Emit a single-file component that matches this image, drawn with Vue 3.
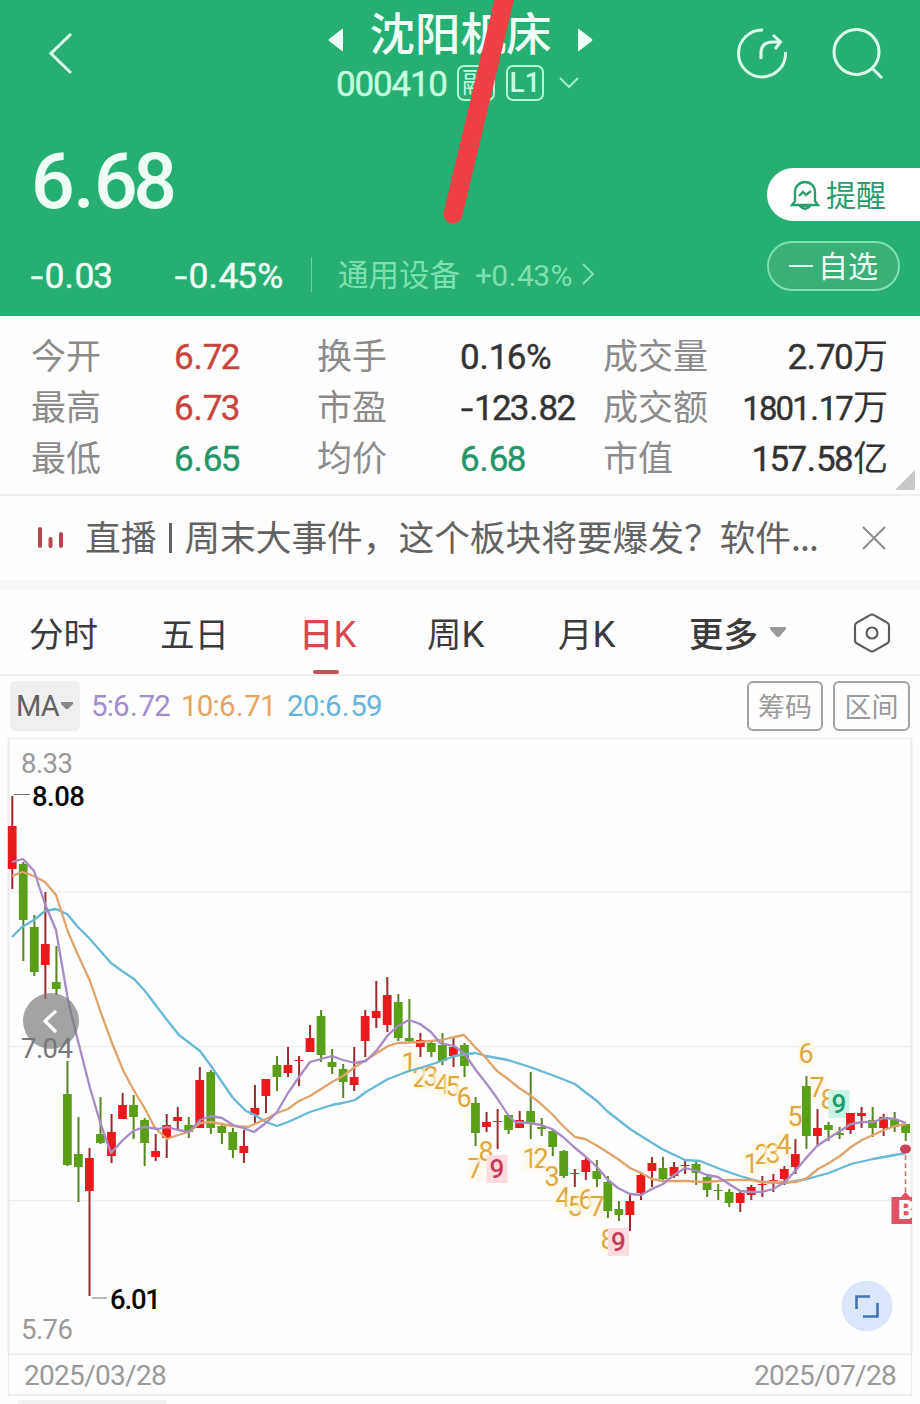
<script setup>
import { h } from 'vue'

// Numerals with roomier punctuation: every sign gets its own spacing
const signs = { '.': 'dot', '-': 'minus', '+': 'plus', '%': 'percent' }
const Num = (props) => h('b', { class: 'num' },
  props.v.split(/([.\-+%])/).filter(Boolean).map((p) => (signs[p] ? h('i', { class: signs[p] }, p) : p)))
Num.props = ['v']

const quotes = [
  [['今开', '6.72', 'up'], ['换手', '0.16%', ''], ['成交量', '2.70', '', '万']],
  [['最高', '6.73', 'up'], ['市盈', '-123.82', ''], ['成交额', '1801.17', '', '万']],
  [['最低', '6.65', 'down'], ['均价', '6.68', 'down'], ['市值', '157.58', '', '亿']],
]

const tabs = [['分时', ''], ['五日', ''], ['日', 'K'], ['周', 'K'], ['月', 'K']]

// direction, body top, body bottom, wick top, wick bottom
const raw = `r 826 869 796 889|g 864 920 862 961|g 927 972 915 976|r 944 965 892 999|g 982 989 946 995
g 1094 1165 1061 1166|g 1154 1167 1117 1202|r 1158 1191 1148 1296|g 1134 1143 1097 1144|r 1132 1156 1114 1163
r 1105 1119 1093 1119|g 1105 1117 1095 1139|g 1120 1143 1118 1166|r 1151 1157 1134 1161|r 1125 1138 1114 1158
r 1117 1121 1107 1130|g 1125 1132 1117 1138|r 1080 1128 1067 1128|g 1072 1128 1070 1134|g 1126 1133 1125 1144
g 1132 1150 1128 1158|r 1146 1153 1130 1163|r 1108 1115 1085 1124|r 1079 1096 1079 1113|g 1065 1077 1056 1091
r 1065 1073 1047 1077|r 1060 1061 1056 1086|r 1038 1052 1025 1052|g 1016 1055 1010 1062|g 1062 1067 1049 1074
g 1069 1082 1064 1098|r 1077 1085 1047 1091|r 1016 1041 1010 1057|r 1011 1018 981 1028|r 995 1025 977 1032
g 1002 1038 994 1041|g 1038 1041 999 1042|r 1040 1047 1033 1057|g 1043 1052 1041 1057|g 1045 1061 1033 1065
r 1047 1056 1038 1067|g 1045 1066 1043 1077|g 1103 1133 1097 1146|r 1122 1127 1112 1132|r 1121 1122 1109 1149
g 1115 1130 1115 1134|r 1120 1128 1111 1128|g 1111 1123 1072 1139|g 1127 1129 1118 1136|g 1131 1147 1130 1156
g 1151 1176 1150 1178|r 1173 1174 1169 1187|r 1160 1172 1158 1180|g 1171 1179 1160 1187|g 1182 1211 1176 1218
g 1209 1215 1201 1221|r 1201 1215 1194 1231|r 1175 1193 1172 1200|r 1163 1171 1157 1187|g 1168 1179 1157 1182
r 1167 1176 1162 1178|r 1165 1166 1160 1174|g 1164 1173 1161 1185|g 1177 1190 1174 1197|g 1190 1191 1184 1200
g 1192 1203 1189 1207|r 1193 1203 1191 1212|r 1187 1195 1185 1200|r 1184 1185 1176 1197|r 1180 1182 1174 1192
r 1169 1179 1166 1185|r 1154 1167 1139 1174|g 1086 1136 1076 1149|r 1128 1136 1109 1145|g 1125 1130 1122 1141
g 1133 1135 1127 1139|r 1113 1130 1113 1134|r 1113 1116 1107 1128|g 1120 1128 1107 1137|r 1117 1128 1114 1136
g 1119 1127 1112 1132|g 1124 1133 1124 1141`

const candles = raw.split(/[|\n]/).map((s, i) => {
  const [dir, ...n] = s.trim().split(' ')
  const [top, bottom, high, low] = n.map(Number)
  return { dir, top, bottom, high, low, x: 12.2 + 11.03 * i }
})

const ma5 = '12,862 23,859 34,871 45,904 56,930 68,1000 77,1037 90,1088 101,1125 111,1153 122,1141 133,1131 144,1127 158,1129 167,1127 178,1130 189,1132 200,1120 211,1116 222,1118 233,1125 243,1128 254,1132 267,1122 277,1112 288,1093 299,1077 310,1062 321,1059 332,1056 343,1060 355,1063 366,1061 377,1050 388,1035 398,1026 409,1020 420,1024 431,1032 440,1043 454,1046 464,1053 475,1069 486,1083 497,1098 508,1115 515,1122 530,1123 541,1125 552,1129 563,1137 574,1147 586,1157 597,1167 608,1180 618,1188 630,1194 641,1195 652,1189 663,1184 674,1175 685,1168 697,1171 707,1175 718,1177 729,1184 740,1191 751,1192 762,1192 773,1189 785,1182 796,1170 807,1157 817,1146 829,1138 840,1131 851,1124 862,1122 873,1122 884,1118 895,1119 906,1123'
const ma10 = '12,876 22,872 34,876 45,882 56,895 68,932 78,955 90,981 101,1013 112,1043 123,1070 133,1089 144,1107 155,1128 167,1139 178,1135 189,1132 200,1123 211,1122 222,1124 233,1126 248,1127 266,1119 277,1113 288,1109 299,1101 310,1096 321,1089 332,1082 343,1076 355,1067 366,1060 377,1053 388,1046 398,1043 420,1042 431,1041 442,1040 454,1037 464,1035 475,1047 486,1058 497,1071 508,1079 519,1088 530,1095 541,1104 552,1114 563,1126 575,1137 585,1139 596,1145 607,1152 618,1159 630,1168 641,1173 652,1179 663,1181 685,1181 707,1182 729,1180 751,1180 762,1182 796,1182 807,1178 818,1169 829,1163 840,1156 851,1147 862,1140 873,1135 884,1130 895,1126 906,1124'
const ma20 = '12,937 22,927 34,920 45,911 56,909 67,914 78,927 89,938 111,963 122,971 134,979 145,991 167,1020 179,1035 200,1051 211,1066 222,1082 233,1098 246,1111 255,1115 266,1122 277,1126 288,1122 310,1112 332,1105 343,1103 355,1100 366,1092 388,1079 409,1071 420,1068 442,1061 454,1056 475,1053 486,1056 508,1060 530,1067 552,1075 575,1084 585,1092 597,1101 607,1111 630,1129 641,1136 662,1149 685,1160 700,1161 720,1169 740,1176 762,1182 785,1183 807,1179 829,1173 851,1164 873,1159 895,1155 906,1153'

// digit, centre x, baseline, chip; every mark lies over the one before it
const marks = [
  ['1', 409, 1072], ['2', 420, 1087], ['3', 431, 1086], ['4', 442, 1094], ['5', 453, 1096], ['6', 464, 1107],
  ['7', 475, 1178], ['8', 486, 1161], ['9', 497, 1178, 'buy'],
  ['1', 530, 1168], ['2', 541, 1168], ['3', 552, 1186],
  ['4', 563, 1207], ['5', 575, 1216], ['6', 586, 1209], ['7', 597, 1216], ['8', 608, 1249], ['9', 618.5, 1251, 'buy'],
  ['1', 751, 1173], ['2', 762, 1164], ['3', 773, 1163], ['4', 784, 1154], ['5', 795, 1126],
  ['6', 806, 1063], ['7', 817, 1097], ['8', 828, 1109], ['9', 839, 1113, 'sell'],
]
</script>

<template>
  <main class="screen">
    <header class="header">
      <div class="titlebar">
        <svg class="back" width="24" height="42" viewBox="0 0 24 42"><path d="M22 1 2 20.500 22 40" /></svg>
        <div class="title">
          <div class="name-row">
            <svg width="16" height="24" viewBox="0 0 16 24"><path class="solid" d="M15 1.500q0-1-1-.5L1 11q-1 1 0 2l13 10q1 .5 1-.5z" /></svg>
            <h1>沈阳机床</h1>
            <svg width="16" height="24" viewBox="0 0 16 24"><path class="solid" d="M1 1.500q0-1 1-.5l13 10q1 1 0 2L2 23q-1 .5-1-.5z" /></svg>
          </div>
          <div class="code-row">
            <span class="num code">000410</span>
            <span class="tag">融</span>
            <span class="tag num l1">L1</span>
            <svg class="caret" width="22" height="14" viewBox="0 0 22 14"><path d="m2 2 9 9 9-9" /></svg>
          </div>
        </div>
        <div class="actions">
          <svg width="52" height="52" viewBox="0 0 52 52"><path d="M27 3A23.500 23.500 0 1 0 49.500 25" /><path d="M25 32V26Q25 15 37 15H44M37 8l7.500 7L39 22" /></svg>
          <svg width="52" height="52" viewBox="0 0 52 52"><circle cx="24.500" cy="25" r="22.500" /><path d="m41 42 9 9" /></svg>
        </div>
      </div>

      <div class="price-row">
        <Num class="price" v="6.68" />
        <button class="remind">
          <svg width="30" height="32" viewBox="0 0 30 32"><path d="M5 22V13a10 10 0 0 1 20 0v9l3 4H2zM10 27q5 6 10 0z" /><path d="m9 17 4-4 3 3 5-4" /></svg>
          <span>提醒</span>
        </button>
      </div>

      <div class="change-row">
        <Num class="diff" v="-0.03" />
        <Num class="pct" v="-0.45%" />
        <i class="divider"></i>
        <span class="sector">通用设备</span>
        <Num class="sector-pct" v="+0.43%" />
        <svg class="go" width="14" height="22" viewBox="0 0 14 22"><path d="m2 1 10 10L2 21" /></svg>
        <button class="watch"><i></i><span>自选</span></button>
      </div>

      <svg class="stroke" width="80" height="230" viewBox="0 0 80 230"><path d="M67-12 13 214" /></svg>
    </header>

    <section class="quotes">
      <template v-for="(row, r) in quotes" :key="r">
        <template v-for="q in row" :key="q[0]">
          <span class="label">{{ q[0] }}</span>
          <span class="value" :class="[q[2], { tail: q[3], long: q[1].length > 6 && q[3] }]"><Num :v="q[1]" />{{ q[3] }}</span>
        </template>
      </template>
      <i class="corner"></i>
    </section>

    <section class="news">
      <svg width="30" height="24" viewBox="0 0 30 24"><path d="M5 3v17M15.500 13v7M26 8v12" /></svg>
      <p>直播<i></i>周末大事件，这个板块将要爆发？软件<em>...</em></p>
      <svg class="close" width="24" height="24" viewBox="0 0 24 24"><path d="m1 1 22 22M23 1 1 23" /></svg>
    </section>

    <nav class="tabs">
      <span v-for="(t, i) in tabs" :key="i" class="tab" :class="{ active: i === 2 }">{{ t[0] }}<b v-if="t[1]" class="num">{{ t[1] }}</b></span>
      <span class="tab more">更多<svg width="18" height="12" viewBox="0 0 18 12"><path d="M1 1h16v2l-6 7q-2 2-4 0L1 3z" /></svg></span>
      <svg class="gear" width="38" height="40" viewBox="0 0 38 40"><path d="M19 1.500q1 0 2 .6l13 7.400q2 1 2 3v15q0 2-2 3l-13 7.400q-2 1.200-4 0L4 30.500q-2-1-2-3v-15q0-2 2-3L17 2.100q1-.6 2-.6z" /><circle cx="19" cy="20" r="5.500" /></svg>
    </nav>

    <section class="ma-bar">
      <span class="ma num">MA<svg width="12" height="8" viewBox="0 0 12 8"><path d="M0 0h12v2L7 7H5L0 2z" /></svg></span>
      <Num class="m m5" v="5:6.72" />
      <Num class="m m10" v="10:6.71" />
      <Num class="m m20" v="20:6.59" />
      <button class="first">筹码</button>
      <button>区间</button>
    </section>

    <svg class="chart" width="920" height="617" viewBox="0 738 920 617">
      <defs>
        <filter id="glow" x="-60%" y="-40%" width="220%" height="180%"><feGaussianBlur stdDeviation="1.600" /></filter>
      </defs>
      <path class="grid" d="M8 892H912M8 1046.500H912M8 1200.500H912" />
      <path class="frame" d="M8.500 738V1355M911.500 738V1355M8 738H912M8 1354.500H912" />

      <text class="axis" x="21" y="773" textLength="52">8.33</text>
      <text class="axis" x="21" y="1339" textLength="52">5.76</text>

      <g v-for="(m, i) in marks" :key="'m' + i">
        <rect v-if="m[3]" :class="['chip', m[3]]" :x="m[1] - 10.500" :y="m[2] - 23" width="21" height="28" />
        <rect v-else class="halo" :x="m[1] - 8" :y="m[2] - 22" width="17" height="25" />
        <text :class="['mark', m[3]]" :x="m[1]" :y="m[2]">{{ m[0] }}</text>
      </g>

      <g v-for="(c, i) in candles" :key="i" :class="c.dir">
        <rect class="wick" :x="c.x - 0.9" :y="c.high" width="2" :height="c.low - c.high" />
        <rect :x="c.x - 4.400" :y="c.top" width="8.800" :height="c.bottom - c.top" />
      </g>

      <polyline class="line blue" :points="ma20" />
      <polyline class="line orange" :points="ma10" />
      <polyline class="line purple" :points="ma5" />

      <circle class="knob" cx="51" cy="1021" r="28" />
      <path class="knob-arrow" d="m56 1011-11 10 11 11" />
      <text class="axis dark" x="21" y="1058" textLength="52">7.04</text>

      <path class="lead" d="M14 794.500H30M92 1298H107" />
      <text class="peak" x="32" y="806" textLength="53">8.08</text>
      <text class="peak" x="110" y="1309" textLength="51">6.01</text>

      <path class="dash" d="M905.500 1155V1193" />
      <ellipse class="dot-mark" cx="905.500" cy="1149" rx="5.500" ry="4.500" />
      <path class="flag" d="M891.500 1197H901l4.500-5 4.500 5h2v27H891.500z" />
      <svg x="891" y="1190" width="21" height="36"><text class="flag-text" x="7" y="29">B</text></svg>

      <circle class="expand" cx="867" cy="1306" r="25.500" />
      <path class="expand-icon" d="M856.500 1309V1296.500H870M877.500 1303V1316.500H863" />
    </svg>

    <footer class="dates">
      <span class="num">2025/03/28</span>
      <span class="num">2025/07/28</span>
    </footer>
    <div class="next"><i></i></div>
  </main>
</template>

<style>
body { background: #fefefe; }
.num i { font-style: normal; }
.num .dot { margin: 0 0.050em 0 0.040em; }
.num .minus { display: inline-block; transform: scaleX(1.250); margin: 0 0.110em 0 0.060em; }
.num .percent { margin-left: 0.040em; letter-spacing: 0; }
</style>

<style scoped>
* { box-sizing: border-box; }
.screen {
  width: 920px;
  height: 1404px;
  overflow: hidden;
  background: #fefefe;
  color: #333;
  font-family: "Noto Sans CJK SC", sans-serif;
}
svg { display: block; fill: none; flex: none; }
button { font: inherit; margin: 0; padding: 0; background: none; }
.num { font-family: Roboto, "Noto Sans CJK SC", sans-serif; font-weight: 400; white-space: nowrap; }

.header {
  position: relative;
  height: 316px;
  background: #27ae73;
  color: #edfff7;
  display: flex;
  flex-direction: column;
}
.header svg path, .header svg circle { stroke: #dcffed; stroke-width: 3; }
.titlebar {
  height: 110px;
  display: grid;
  grid-template-columns: 1fr 270px 1fr;
}
.back { margin: 33px 0 0 49px; }
.name-row { display: flex; align-items: center; justify-content: space-between; height: 68px; padding: 12px 2px 0 3px; }
.name-row h1 { margin: -18px 0 0; font-size: 45.500px; line-height: 60px; font-weight: 500; }
.header svg .solid { fill: #edfff7; stroke: none; }
.code-row { display: flex; align-items: center; height: 34px; margin-top: -2px; padding-left: 11px; }
.code { flex: none; font-size: 35px; letter-spacing: -1.200px; line-height: 34px; width: 121px; color: #c4ffe0; margin-top: 4px; -webkit-text-stroke: 0.4px; }
.tag {
  flex: none; width: 38px; height: 36px; border: 2px solid #b5f8d6; border-radius: 7px;
  font-size: 28px; line-height: 29px; text-align: center; margin-right: 11px; color: #c4ffe0;
}
.l1 { font-size: 28px; line-height: 32px; font-weight: 500; margin-right: 14px; }
.header .caret path { stroke-width: 2; stroke: #a5efca; }
.actions { display: flex; justify-content: flex-end; gap: 44px; padding: 27px 36px 0 0; }

.price-row { display: flex; justify-content: space-between; height: 130px; }
.price { font-size: 77px; font-weight: 500; letter-spacing: -4.500px; line-height: 90px; margin: 27px 0 0 31px; }
.remind {
  width: 153px; height: 53px; margin-top: 58px; border: 0; border-radius: 27px 0 0 27px; background: #fff;
  display: flex; align-items: center; gap: 6px; padding-left: 23px; color: #2b9c6d; font-size: 30px; white-space: nowrap;
}
.remind span, .watch span { margin-top: -4px; }
.header .remind svg path { stroke: #2b9c6d; stroke-width: 2.300; }

.change-row { display: flex; align-items: center; height: 66px; padding: 2px 0 0 30px; }
.diff, .pct { font-size: 35.500px; letter-spacing: -1.300px; margin-top: 3px; -webkit-text-stroke: 0.4px; }
.diff { width: 144px; }
.pct { width: 137px; }
.divider { width: 1px; height: 35px; background: #6fd1a3; margin-right: 26px; }
.sector { font-size: 30.500px; color: #80dfb0; width: 137px; margin-top: -3px; }
.sector-pct { font-size: 30px; letter-spacing: -0.800px; color: #80dfb0; width: 106px; margin-top: 2px; }
.header .go path { stroke: #80dfb0; stroke-width: 2; }
.watch {
  width: 133px; height: 50px; margin: -16px 20px 0 auto; border: 2px solid #7fe0b1; border-radius: 25px;
  background: #3caf79; color: #edfff7; font-size: 30px; display: flex; align-items: center; justify-content: center; gap: 5px;
}
.watch i { width: 24px; height: 2px; background: #dcffed; }
.stroke { position: absolute; left: 440px; top: 0; }
.header .stroke path { stroke: #ef4145; stroke-width: 19; stroke-linecap: round; }

.quotes {
  position: relative; height: 180px; padding: 12px 32px 0 31px; border-bottom: 2px solid #f0f0f0;
  display: grid; grid-template-columns: 143px 143px 143px 143px 110px 175px; grid-auto-rows: 51px;
  font-size: 35px; line-height: 51px;
}
.label { color: #8b8b8b; white-space: nowrap; }
.value { white-space: nowrap; }
.value .num { font-size: 35px; letter-spacing: -1.700px; -webkit-text-stroke: 0.4px; }
.value.tail { text-align: right; }
.value.tail .num { margin-right: 1px; }
.value.long .num { font-size: 33px; letter-spacing: -1.900px; }
.up { color: #c8453f; }
.down { color: #259467; }
.corner { position: absolute; right: 5px; bottom: 4px; border: 10px solid #c8c8c8; border-top-color: transparent; border-left-color: transparent; }

.news { height: 84px; display: flex; align-items: center; padding-left: 35px; }
.news path { stroke: #b1474f; stroke-width: 4; stroke-linecap: round; }
.news p { display: flex; align-items: center; margin: -4px 0 0 20px; width: 777px; font-size: 35.700px; line-height: 50px; color: #626262; white-space: nowrap; }
.news p i { width: 3px; height: 30px; background: #626262; margin: 4px 12px 0 13px; }
.news em { font-style: normal; letter-spacing: -1px; }
.news .close path { stroke: #8c8c8c; stroke-width: 2; stroke-linecap: butt; }

.tabs {
  height: 96px; display: flex; border-top: 10px solid #f8f8f8; border-bottom: 2px solid #f0f0f0;
  padding-left: 29px; font-size: 34.500px; line-height: 84px; color: #3b3b3b;
}
.tab { position: relative; width: 131px; white-space: nowrap; }
.tab:nth-child(2) { width: 139px; }
.tab:nth-child(3) { width: 128px; }
.tab:nth-child(4) { width: 131px; }
.tab .num { font-size: 36.500px; }
.tab.active { color: #d9484f; font-weight: 500; }
.tab.active::after { content: ""; position: absolute; left: 14px; bottom: 0; width: 26px; height: 4px; border-radius: 2px; background: #c4545f; }
.tab.more { width: 164px; display: flex; align-items: center; gap: 11px; font-weight: 500; }
.more path { fill: #999; }
.gear { margin-top: 23px; }
.gear path, .gear circle { stroke: #5e5e5e; stroke-width: 2.200; }

.ma-bar { height: 62px; display: flex; align-items: center; padding: 0 10px 2px; }
.ma { display: flex; align-items: center; gap: 2px; width: 70px; height: 50px; padding-left: 6px; border-radius: 5px; background: #efefef; color: #626262; font-size: 29px; letter-spacing: -0.800px; }
.ma path { fill: #888; }
.m { font-size: 29.500px; letter-spacing: -0.800px; white-space: nowrap; }
.m5 { width: 90px; margin-left: 11px; color: #a28cce; }
.m10 { width: 106px; color: #e6a460; }
.m20 { color: #68b3da; }
.ma-bar button { width: 77px; height: 50px; border: 2px solid #a2a2a2; border-radius: 6px; color: #999; font-size: 27px; line-height: 42px; }
.ma-bar .first { margin: 0 10px 0 auto; width: 76px; }

.grid { stroke: #efefef; stroke-width: 1.500; }
.frame { stroke: #ececec; stroke-width: 2; }
.chart text { font-family: Roboto, sans-serif; }
.axis { font-size: 27.500px; fill: #999; }
.axis.dark { fill: #777; }
.peak { font-size: 27.500px; font-weight: 500; fill: #050505; }
.lead { stroke: #777; stroke-width: 1.200; }
.r { fill: #e91a1c; }
.r .wick { fill: #9a2a30; }
.g { fill: #5a9f18; }
.g .wick { fill: #578524; }
.line { stroke-width: 2.300; stroke-linejoin: round; }
.blue { stroke: #67b8d4; }
.orange { stroke: #dfa36b; }
.purple { stroke: #a78bc3; }
.halo { fill: #fff9ea; opacity: 0.9; filter: url(#glow); }
.mark { font-size: 27px; text-anchor: middle; fill: #dfa83f; }
.chip.buy { fill: #fcdcde; }
.chip.sell { fill: #c9f3e3; }
.mark.buy, .mark.sell { font-size: 26px; font-weight: 500; }
.mark.buy { fill: #c63d5b; }
.mark.sell { fill: #16a070; }
.knob { fill: #777; opacity: 0.68; }
.knob-arrow { stroke: #fff; stroke-width: 3.200; }
.dash { stroke: #cc6f7b; stroke-width: 1.500; stroke-dasharray: 5 3; }
.dot-mark { fill: #cb4356; }
.flag { fill: #df5364; }
.chart .flag-text { font-size: 25px; font-weight: 900; fill: #fff; }
.expand { fill: #dce6fa; }
.expand-icon { stroke: #4475b3; stroke-width: 2.600; }

.dates {
  height: 41px; margin: 0 8px; padding: 2px 15px 0 15px; display: flex; justify-content: space-between; align-items: center;
  border: solid #ededed; border-width: 0 1px 2px; color: #999; font-size: 28px; letter-spacing: -0.700px;
}
.next { height: 8px; padding: 4px 18px 0; }
.next i { display: block; width: 149px; height: 4px; background: #efefef; border-radius: 4px 4px 0 0; }
</style>
